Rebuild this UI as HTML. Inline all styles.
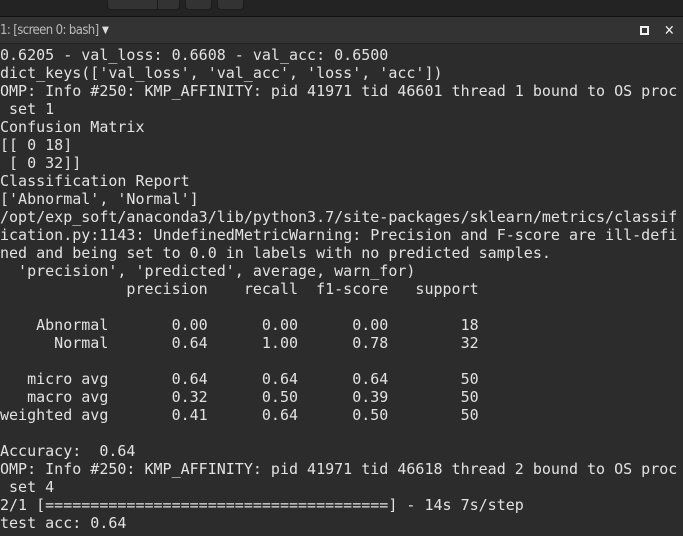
<!DOCTYPE html>
<html><head><style>
body{margin:0;width:683px;height:536px;overflow:hidden;background:#2c2c2c;font-family:"DejaVu Sans Mono","Liberation Mono",monospace;}
.top{position:absolute;left:0;top:0;width:683px;height:16px;background:#232323;border-bottom:1px solid #111;}
.btn{position:absolute;top:-4px;height:14px;background:#333;border:1px solid #1c1c1c;border-radius:4px;box-sizing:border-box;}
.tab{position:absolute;left:0;top:17px;width:683px;height:26px;background:#333;border-bottom:1px solid #222;color:#bbb;font-family:"DejaVu Sans Condensed","Liberation Sans Narrow",sans-serif;font-size:13px;line-height:28px;}
pre{position:absolute;left:0;top:46px;margin:0;font-size:15px;line-height:18px;color:#e2e2e2;font-family:"DejaVu Sans Mono",monospace;}
</style></head><body>
<div class="top">
<div class="btn" style="left:107px;width:73px"></div>
<div style="position:absolute;left:157px;top:0;width:1px;height:10px;background:#1c1c1c"></div>
<div class="btn" style="left:185px;width:27px"></div>
<div class="btn" style="left:217px;width:27px"></div>
</div>
<div class="tab"><span style="letter-spacing:-0.6px">1: [screen 0: bash]</span><span style="position:absolute;left:102px;top:0;font-size:10px;color:#ddd">▼</span>
<div style="position:absolute;left:640px;top:9px;width:5px;height:5px;border:2px solid #eee"></div>
<div style="position:absolute;left:664px;top:0;color:#eee;font-weight:bold;font-size:14px">✕</div>
</div>
<pre>0.6205 - val_loss: 0.6608 - val_acc: 0.6500
dict_keys(['val_loss', 'val_acc', 'loss', 'acc'])
OMP: Info #250: KMP_AFFINITY: pid 41971 tid 46601 thread 1 bound to OS proc
 set 1
Confusion Matrix
[[ 0 18]
 [ 0 32]]
Classification Report
['Abnormal', 'Normal']
/opt/exp_soft/anaconda3/lib/python3.7/site-packages/sklearn/metrics/classif
ication.py:1143: UndefinedMetricWarning: Precision and F-score are ill-defi
ned and being set to 0.0 in labels with no predicted samples.
  'precision', 'predicted', average, warn_for)
              precision    recall  f1-score   support

    Abnormal       0.00      0.00      0.00        18
      Normal       0.64      1.00      0.78        32

   micro avg       0.64      0.64      0.64        50
   macro avg       0.32      0.50      0.39        50
weighted avg       0.41      0.64      0.50        50

Accuracy:  0.64
OMP: Info #250: KMP_AFFINITY: pid 41971 tid 46618 thread 2 bound to OS proc
 set 4
2/1 [======================================] - 14s 7s/step
test acc: 0.64</pre>
</body></html>
